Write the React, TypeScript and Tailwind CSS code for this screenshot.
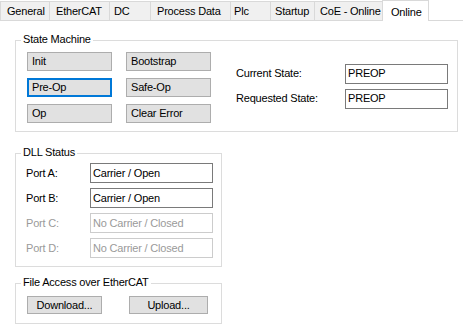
import React from "react";

const tabs = [
  { label: "General", cls: "w-[49px] pl-[6px]" },
  { label: "EtherCAT", cls: "w-[60px] pl-[6px]" },
  { label: "DC", cls: "w-[41px] pl-[4px]" },
  { label: "Process Data", cls: "w-[80px] pl-[6px]" },
  { label: "Plc", cls: "w-[40px] pl-[3px]" },
  { label: "Startup", cls: "w-[44px] pl-[4px]" },
  { label: "CoE - Online", cls: "w-[68px] pl-[5px]" },
];

function Group({
  title,
  className,
  children,
}: {
  title: string;
  className: string;
  children: React.ReactNode;
}) {
  return (
    <div className={"relative border border-[#dcdcdc] " + className}>
      <span className="absolute top-[-8px] left-[5px] px-[2px] bg-white leading-[13px] whitespace-nowrap">
        {title}
      </span>
      {children}
    </div>
  );
}

function Btn({ label, focused }: { label: string; focused?: boolean }) {
  return (
    <div
      className={
        "h-[19px] bg-[#e1e1e1] flex items-center whitespace-nowrap " +
        (focused
          ? "border-2 border-[#0078d7] pl-[3px]"
          : "border border-[#adadad] pl-[4px]")
      }
    >
      {label}
    </div>
  );
}

function Field({ value, disabled }: { value: string; disabled?: boolean }) {
  return (
    <div
      className={
        "h-[20px] bg-white flex items-center pl-[2px] whitespace-nowrap border " +
        (disabled
          ? "border-[#cccccc] text-[#9a9a9a]"
          : "border-[#7a7a7a] text-black")
      }
    >
      {value}
    </div>
  );
}

export default function App() {
  const ports = [
    { l: "Port A:", v: "Carrier / Open", d: false },
    { l: "Port B:", v: "Carrier / Open", d: false },
    { l: "Port C:", v: "No Carrier / Closed", d: true },
    { l: "Port D:", v: "No Carrier / Closed", d: true },
  ];
  return (
    <div className="w-[463px] h-[331px] bg-white text-[11px] leading-[13px] tracking-[-0.2px] text-black font-['Liberation_Sans',Arial,sans-serif] overflow-hidden">
      <div className="flex items-end h-[21px]">
        {tabs.map((t) => (
          <div
            key={t.label}
            className={
              "h-[20px] shrink-0 bg-[#f0f0f0] border-t border-l border-b border-[#d9d9d9] flex items-center pt-[1px] whitespace-nowrap overflow-hidden " +
              t.cls
            }
          >
            {t.label}
          </div>
        ))}
        <div className="h-[21px] w-[47px] shrink-0 bg-white border-t border-l border-r border-[#d9d9d9] flex items-start pt-[5px] pl-[8px]">
          Online
        </div>
        <div className="flex-1 h-[1px] bg-[#d9d9d9]" />
      </div>

      <div className="pl-[15px] pt-[19px]">
        <Group title="State Machine" className="w-[443px] h-[92px]">
          <div className="flex h-full pl-[11px] pr-[9px]">
            <div className="pt-[11px] grid grid-cols-[85px_85px] gap-x-[14px] gap-y-[7px] auto-rows-[19px] self-start">
              <Btn label="Init" />
              <Btn label="Bootstrap" />
              <Btn label="Pre-Op" focused />
              <Btn label="Safe-Op" />
              <Btn label="Op" />
              <Btn label="Clear Error" />
            </div>
            <div className="ml-auto self-center grid grid-cols-[109px_103px] gap-y-[5px] auto-rows-[20px]">
              <div className="flex items-center">Current State:</div>
              <Field value="PREOP" />
              <div className="flex items-center">Requested State:</div>
              <Field value="PREOP" />
            </div>
          </div>
        </Group>

        <Group title="DLL Status" className="mt-[21px] w-[207px] h-[114px]">
          <div className="pt-[9px] pl-[10px] pr-[8px] grid grid-cols-[64px_123px] gap-y-[5px] auto-rows-[20px]">
            {ports.map((p) => (
              <React.Fragment key={p.l}>
                <div
                  className={
                    "flex items-center " + (p.d ? "text-[#9a9a9a]" : "text-black")
                  }
                >
                  {p.l}
                </div>
                <Field value={p.v} disabled={p.d} />
              </React.Fragment>
            ))}
          </div>
        </Group>

        <Group title="File Access over EtherCAT" className="mt-[16px] w-[207px] h-[41px]">
          <div className="pt-[12px] pl-[11px] flex gap-[27px]">
            <div className="w-[75px] h-[18px] bg-[#e1e1e1] border border-[#adadad] flex items-center justify-center">
              Download...
            </div>
            <div className="w-[79px] h-[18px] bg-[#e1e1e1] border border-[#adadad] flex items-center justify-center">
              Upload...
            </div>
          </div>
        </Group>
      </div>
    </div>
  );
}
